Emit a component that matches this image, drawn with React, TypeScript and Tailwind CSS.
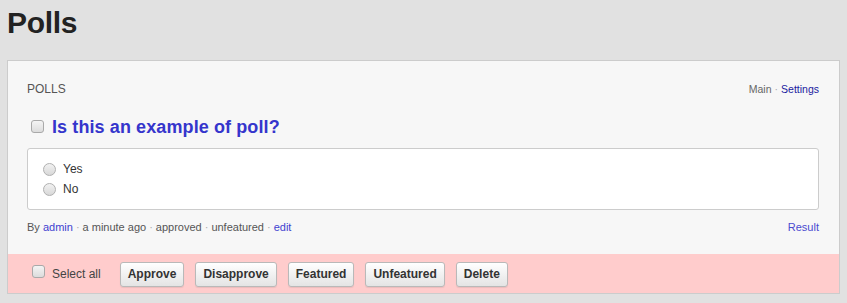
import React from 'react';

const font = { fontFamily: '"Liberation Sans", Arial, sans-serif' };

function Box() {
  return (
    <span className="inline-block w-[13px] h-[13px] rounded-[3px] border border-[#a9a9a9] bg-gradient-to-b from-[#f4f4f4] to-[#dcdcdc] shrink-0" />
  );
}

function Radio() {
  return (
    <span className="inline-block w-[13px] h-[13px] rounded-full border border-[#b0b0b0] bg-gradient-to-b from-[#f2f2f2] to-[#d8d8d8] shrink-0" />
  );
}

const Dot = () => <span className="text-[#aaa] px-[3px]">·</span>;

const actions = ['Approve', 'Disapprove', 'Featured', 'Unfeatured', 'Delete'];

export default function App() {
  return (
    <div
      className="w-[847px] h-[303px] bg-[#e1e1e1] px-[7px] overflow-hidden"
      style={font}
    >
      {/* Heading */}
      <h1 className="h-[60px] pt-[5px] text-[30px] leading-[36px] font-bold text-[#222] tracking-[-0.3px]">
        Polls
      </h1>

      {/* Card */}
      <div className="w-[833px] border border-[#cccccc] bg-[#f7f7f7]">
        <div className="px-[19px] pt-[20px]">
          <div className="flex justify-between items-baseline text-[12px] leading-[16px]">
            <span className="text-[#555]">POLLS</span>
            <span className="pr-[1px] text-[10.5px]">
              <span className="text-[#666]">Main</span>
              <Dot />
              <span className="text-[#1a1aa0]">Settings</span>
            </span>
          </div>

          <div className="flex items-center mt-[18px] h-[24px]">
            <span className="ml-[4px] mt-[2px]">
              <Box />
            </span>
            <span className="ml-[8px] text-[18px] leading-[24px] font-bold text-[#3535cc] tracking-[0.1px]">
              Is this an example of poll?
            </span>
          </div>

          <div className="mt-[9px] mr-[1px] h-[62px] rounded-[3px] border border-[#cccccc] bg-white pl-[15px] pt-[10px]">
            {['Yes', 'No'].map((o) => (
              <div key={o} className="flex items-center h-[20px] text-[12px] text-[#333]">
                <Radio />
                <span className="ml-[7px]">{o}</span>
              </div>
            ))}
          </div>

          <div className="flex justify-between mt-[9px] text-[11px] leading-[16px] text-[#555] pr-[1px]">
            <span>
              By <span className="text-[#3f3fd0]">admin</span>
              <Dot />a minute ago
              <Dot />approved
              <Dot />unfeatured
              <Dot />
              <span className="text-[#3f3fd0]">edit</span>
            </span>
            <span className="text-[#4a4ad0]">Result</span>
          </div>
        </div>

        {/* Bulk actions */}
        <div className="mt-[19px] h-[39px] bg-[#ffcccc] flex items-center pl-[24px]">
          <span className="-mt-[1px]">
            <Box />
          </span>
          <span className="ml-[7px] text-[12px] text-[#444]">Select all</span>
          <div className="flex gap-[11px] ml-[19px] mt-[1px]">
            {actions.map((a) => (
              <button
                key={a}
                className="h-[25px] px-[7px] rounded-[3px] border border-[#b9b9b9] bg-gradient-to-b from-[#ffffff] to-[#e4e4e4] text-[12px] font-bold text-[#333] shadow-[0_1px_1px_rgba(0,0,0,0.08)]"
              >
                {a}
              </button>
            ))}
          </div>
        </div>
      </div>
    </div>
  );
}
